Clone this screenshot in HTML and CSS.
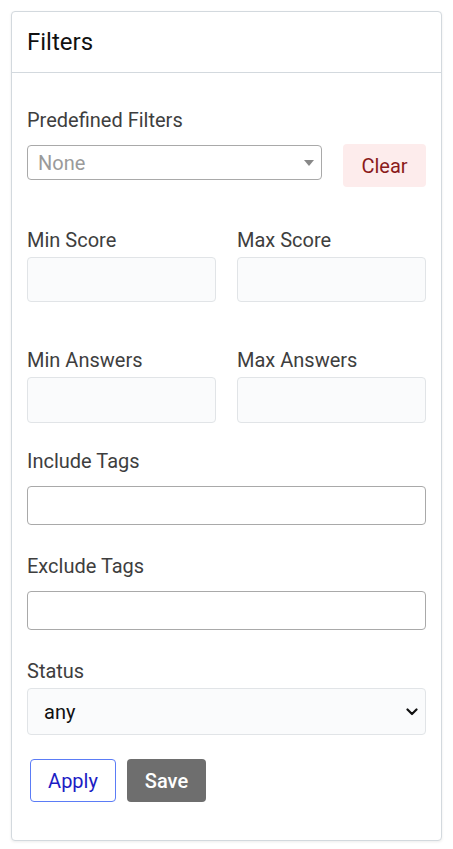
FILE: index.html
```html
<!DOCTYPE html>
<html lang="en">
<head>
<meta charset="utf-8">
<title>Filters</title>
<link rel="stylesheet" href="styles.css">
</head>
<body>
<div class="card">
  <div class="card-header">Filters</div>
  <div class="card-body">
    <div class="field">
      <label class="label">Predefined Filters</label>
      <div class="predef-row">
        <div class="select-wrap predef">
          <select class="select-outline"><option>None</option></select>
          <svg class="caret" width="10" height="6" viewBox="0 0 10 6"><path d="M0 0H10L5 6Z" fill="#888"/></svg>
        </div>
        <button class="btn btn-clear">Clear</button>
      </div>
    </div>

    <div class="grid2 sec-score">
      <div class="field">
        <label class="label">Min Score</label>
        <input class="input-soft tall" type="text">
      </div>
      <div class="field">
        <label class="label">Max Score</label>
        <input class="input-soft tall" type="text">
      </div>
    </div>

    <div class="grid2 sec-answers">
      <div class="field">
        <label class="label">Min Answers</label>
        <input class="input-soft tall2" type="text">
      </div>
      <div class="field">
        <label class="label">Max Answers</label>
        <input class="input-soft tall2" type="text">
      </div>
    </div>

    <div class="field sec-include">
      <label class="label">Include Tags</label>
      <input class="input-outline" type="text">
    </div>

    <div class="field sec-exclude">
      <label class="label">Exclude Tags</label>
      <input class="input-outline" type="text">
    </div>

    <div class="field sec-status">
      <label class="label">Status</label>
      <div class="select-wrap">
        <select class="select-soft"><option>any</option></select>
        <svg class="chevron" width="12" height="8" viewBox="0 0 12 8"><path d="M1.5 1.5L6 6L10.5 1.5" fill="none" stroke="#111" stroke-width="2.2" stroke-linecap="round" stroke-linejoin="round"/></svg>
      </div>
    </div>

    <div class="actions">
      <button class="btn btn-apply">Apply</button>
      <button class="btn btn-save">Save</button>
    </div>
  </div>
</div>
</body>
</html>
```

FILE: styles.css
```css
* { box-sizing: border-box; }

html, body { background: #ffffff; }

body {
  margin: 0;
  padding: 11px;
  font-family: Roboto, "Liberation Sans", Arial, sans-serif;
}

.card {
  border: 1px solid #d3d9de;
  border-radius: 4px;
  background: #fff;
  box-shadow: 0 1px 3px rgba(0, 0, 0, 0.08);
  height: 830px;
}

.card-header {
  height: 61px;
  line-height: 60px;
  padding: 0 15px;
  font-size: 24px;
  color: #111;
  border-bottom: 1px solid #d3d9de;
}

.card-body {
  padding: 35px 15px 37px;
}

.field {
  display: flex;
  flex-direction: column;
  min-width: 0;
}

.label {
  font-size: 20px;
  line-height: 24px;
  color: #3e3e3e;
}

.predef-row {
  display: flex;
  align-items: flex-start;
  gap: 21px;
  margin-top: 12px;
}

.select-wrap {
  position: relative;
}

.select-wrap.predef {
  flex: 1;
  min-width: 0;
  margin-top: 1px;
}

select {
  -webkit-appearance: none;
  appearance: none;
  width: 100%;
  font-family: Roboto, "Liberation Sans", Arial, sans-serif;
  font-size: 20px;
  outline: none;
}

.select-outline {
  height: 35px;
  border: 1px solid #a9a9a9;
  border-radius: 4px;
  background: #fff;
  color: #9a9a9a;
  padding: 0 10px;
}

.caret {
  position: absolute;
  right: 8px;
  top: 15px;
}

.btn {
  font-family: Roboto, "Liberation Sans", Arial, sans-serif;
  font-size: 20px;
  border-radius: 4px;
  cursor: pointer;
  padding: 0;
}

.btn-clear {
  flex: none;
  width: 83px;
  height: 43px;
  border: none;
  background: #fdecec;
  color: #8b1a1a;
}

.grid2 {
  display: grid;
  grid-template-columns: minmax(0, 1fr) minmax(0, 1fr);
  column-gap: 21px;
}

.sec-score { margin-top: 41px; }
.sec-answers { margin-top: 46px; }
.sec-include { margin-top: 26px; }
.sec-exclude { margin-top: 29px; }
.sec-status { margin-top: 29px; }

input {
  width: 100%;
  min-width: 0;
  font-family: Roboto, "Liberation Sans", Arial, sans-serif;
  font-size: 20px;
  outline: none;
}

.input-soft {
  margin-top: 5px;
  border: 1px solid #e1e4e7;
  border-radius: 4px;
  background: #fafbfc;
}

.tall { height: 45px; }
.tall2 { height: 46px; }

.input-outline {
  margin-top: 13px;
  height: 39px;
  border: 1px solid #a9a9a9;
  border-radius: 4px;
  background: #fff;
}

.select-soft {
  margin-top: 5px;
  height: 47px;
  border: 1px solid #e1e4e7;
  border-radius: 4px;
  background: #fafbfc;
  color: #111;
  padding: 0 16px;
  display: block;
}

.chevron {
  position: absolute;
  right: 8px;
  top: 25px;
}

.actions {
  display: flex;
  gap: 11px;
  margin-top: 24px;
  padding-left: 3px;
}

.btn-apply {
  width: 86px;
  height: 43px;
  border: 1px solid #5b7cf6;
  background: #fff;
  color: #1c1cc4;
}

.btn-save {
  width: 79px;
  height: 43px;
  border: none;
  background: #6e6e6e;
  color: #fff;
  font-weight: 500;
}
```
